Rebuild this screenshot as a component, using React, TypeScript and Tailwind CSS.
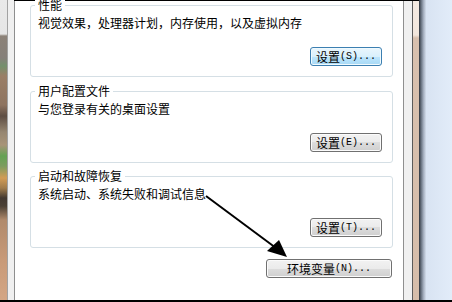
import React from "react";

const cjk = "font-['Noto_Sans_CJK_SC','Liberation_Sans',sans-serif]";

function Btn({
  label,
  mnemonic,
  width,
  focused = false,
}: {
  label: string;
  mnemonic: string;
  width: string;
  focused?: boolean;
}) {
  const base =
    "h-[19px] flex items-center justify-center rounded-[3px] border text-[12px] leading-[12px] text-black";
  const normal =
    "border-[#707070] bg-[linear-gradient(to_bottom,#f2f2f2_0%,#ebebeb_50%,#dddddd_50%,#cfcfcf_100%)] shadow-[inset_0_0_0_1px_#fbfbfb]";
  const focus =
    "border-[#3c7fb1] bg-[linear-gradient(to_bottom,#eaf6fd_0%,#d9f0fc_50%,#bee6fd_50%,#a7d9f5_100%)] shadow-[inset_0_0_0_1px_#f0fafe]";
  return (
    <div className={`${base} ${focused ? focus : normal} ${width}`}>
      <span className={cjk}>{label}</span>
      <span className="font-['Liberation_Mono',monospace] text-[10px] leading-[12px] pt-px">
        {`(${mnemonic})...`}
      </span>
    </div>
  );
}

function Group({
  title,
  desc,
  children,
  className = "",
}: {
  title: string;
  desc: string;
  children: React.ReactNode;
  className?: string;
}) {
  return (
    <div
      className={`relative ml-[15px] w-[363px] h-[72px] rounded-[3px] border border-[#d5dfe5] flex flex-col ${className}`}
    >
      <span
        className={`absolute left-[4px] top-[-7px] px-[3px] bg-white text-[12px] leading-[12px] text-black ${cjk}`}
      >
        {title}
      </span>
      <div
        className={`pl-[7px] pt-[11px] h-[23px] text-[12px] leading-[12px] text-black ${cjk}`}
      >
        {desc}
      </div>
      <div className="flex justify-end mr-[10px] mt-[18px]">{children}</div>
    </div>
  );
}

export default function App() {
  return (
    <div className="relative w-[452px] h-[302px] overflow-hidden flex flex-col bg-white">
      <div className="flex h-[300px]">
        {/* left blurred window frame strip */}
        <div className="w-[7px] bg-[linear-gradient(to_bottom,#e9e9e9_0px,#e6e6e6_34px,#8c8278_36px,#86807a_58px,#74906c_66px,#9a7e66_76px,#8e7460_105px,#5e4e44_116px,#968670_132px,#a89478_145px,#64a254_156px,#7c9c60_166px,#d29c56_178px,#a07c4c_188px,#423830_198px,#4a4034_206px,#b08a6c_220px,#c89a78_260px,#d4a684_300px)]" />
        <div className="w-px bg-[#a2a2a2]" />
        <div className="w-[6px] bg-[#f0f0f0]" />
        <div className="flex border-t border-black">
          <div className="w-px bg-[#8e8f8f]" />
          <div className="w-[388px] bg-white flex flex-col">
            <Group
              className="mt-[4px]"
              title="性能"
              desc="视觉效果，处理器计划，内存使用，以及虚拟内存"
            >
              <Btn label="设置" mnemonic="S" width="w-[72px]" focused />
            </Group>
            <Group
              className="mt-[14px]"
              title="用户配置文件"
              desc="与您登录有关的桌面设置"
            >
              <Btn label="设置" mnemonic="E" width="w-[72px]" />
            </Group>
            <Group
              className="mt-[13px]"
              title="启动和故障恢复"
              desc="系统启动、系统失败和调试信息"
            >
              <Btn label="设置" mnemonic="T" width="w-[72px]" />
            </Group>
            <div className="flex justify-end mr-[11px] mt-[11px]">
              <Btn label="环境变量" mnemonic="N" width="w-[126px]" />
            </div>
          </div>
          <div className="w-px bg-[#8f8f8f]" />
          <div className="w-[8px] bg-[#f0f0f0]" />
          <div className="w-px bg-[#5a5a5a]" />
          <div className="w-[6px] bg-[linear-gradient(to_bottom,#f4eae2_0px,#f2e6dc_34px,#d8c0ae_37px,#d6bdaa_300px)]" />
        </div>
        <div className="w-[7px] bg-[linear-gradient(to_right,#2e343c,#66707e_30%,#a4aebe_65%,#d4deec)]" />
        <div className="flex-1 bg-[linear-gradient(to_right,#d8e3f2,#e2ecf9)]" />
      </div>
      <div className="h-[2px] bg-black" />

      {/* annotation arrow */}
      <svg
        className="absolute left-0 top-0 pointer-events-none"
        width="452"
        height="302"
        viewBox="0 0 452 302"
      >
        <line
          x1="206"
          y1="196"
          x2="276"
          y2="248"
          stroke="#000"
          strokeWidth="2"
        />
        <polygon points="267,251 279,240 287,257" fill="#000" />
      </svg>
    </div>
  );
}
